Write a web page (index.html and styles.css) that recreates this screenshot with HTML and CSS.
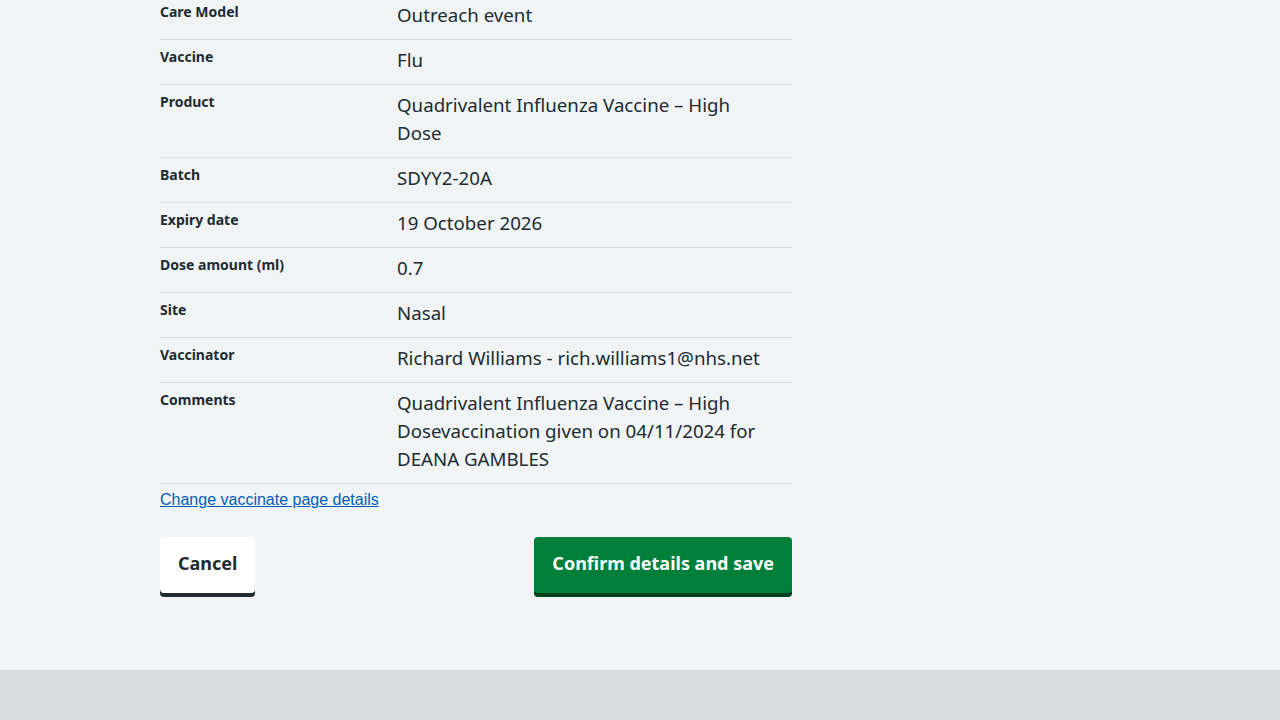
FILE: index.html
```html
<!DOCTYPE html>
<html lang="en">
<head>
<meta charset="utf-8">
<title>Check and confirm</title>
<link rel="stylesheet" href="styles.css">
</head>
<body>
<main class="main">
  <div class="column">
    <dl class="summary">
      <div class="row"><dt class="key">Care Model</dt><dd class="value">Outreach event</dd></div>
      <div class="row"><dt class="key">Vaccine</dt><dd class="value">Flu</dd></div>
      <div class="row"><dt class="key">Product</dt><dd class="value">Quadrivalent Influenza Vaccine – High Dose</dd></div>
      <div class="row"><dt class="key">Batch</dt><dd class="value">SDYY2-20A</dd></div>
      <div class="row"><dt class="key">Expiry date</dt><dd class="value">19 October 2026</dd></div>
      <div class="row"><dt class="key">Dose amount (ml)</dt><dd class="value">0.7</dd></div>
      <div class="row"><dt class="key">Site</dt><dd class="value">Nasal</dd></div>
      <div class="row"><dt class="key">Vaccinator</dt><dd class="value">Richard Williams - rich.williams1@nhs.net</dd></div>
      <div class="row"><dt class="key">Comments</dt><dd class="value">Quadrivalent Influenza Vaccine – High Dosevaccination given on 04/11/2024 for DEANA GAMBLES</dd></div>
    </dl>
    <a class="change-link" href="#">Change vaccinate page details</a>
    <div class="actions">
      <button class="button button-secondary" type="button">Cancel</button>
      <button class="button button-primary" type="button">Confirm details and save</button>
    </div>
  </div>
</main>
<footer class="footer"></footer>
</body>
</html>
```
FILE: styles.css
```css
html, body {
  margin: 0;
  padding: 0;
}
body {
  background: #f0f4f5;
  color: #212b32;
  font-family: "Noto Sans", "Open Sans", sans-serif;
}
.main {
  padding: 0 0 77px 160px;
}
.column {
  width: 632px;
}
.summary {
  margin: -5px 0 0 0;
  padding: 0;
}
.row {
  display: grid;
  grid-template-columns: 237px 1fr;
  border-bottom: 1px solid #d8dde0;
}
.key {
  margin: 0;
  padding: 5px 0 11px;
  font-size: 14px;
  font-weight: 700;
  line-height: 24px;
}
.value {
  margin: 0;
  padding: 6px 24px 10px 0;
  font-size: 18.7px;
  line-height: 28px;
}
.change-link {
  display: inline-block;
  margin-top: 4px;
  font-family: "Liberation Sans", Arial, sans-serif;
  font-size: 16px;
  line-height: 24px;
  color: #005eb8;
  text-decoration: underline;
}
.actions {
  display: flex;
  justify-content: space-between;
  margin-top: 25px;
}
.button {
  font-family: "Noto Sans", "Open Sans", sans-serif;
  font-size: 18px;
  font-weight: 700;
  line-height: 28px;
  padding: 10px 16px 14px;
  border: 2px solid transparent;
  border-radius: 4px;
  cursor: pointer;
}
.button-secondary {
  background: #ffffff;
  color: #212b32;
  box-shadow: 0 4px 0 #212b32;
}
.button-primary {
  background: #007f3b;
  color: #ffffff;
  box-shadow: 0 4px 0 #00401e;
}
.footer {
  background: #d8dde0;
  height: 50px;
}
```
